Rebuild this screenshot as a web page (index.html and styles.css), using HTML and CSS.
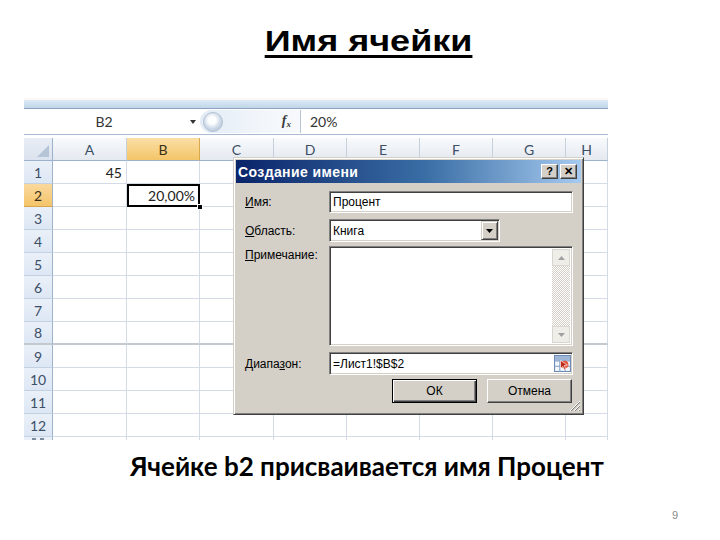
FILE: index.html
```html
<!DOCTYPE html>
<html lang="ru">
<head>
<meta charset="utf-8">
<title>Имя ячейки</title>
<link rel="stylesheet" href="styles.css">
</head>
<body>
<div class="slide">
  <div class="titlewrap"><h1 class="title">Имя ячейки</h1></div>

  <div class="shot">
    <div class="ribbon"></div>
    <div class="fbar">
      <div class="namebox"><span class="nb-text">B2</span><span class="nb-arrow"></span></div>
      <div class="grip"><span class="knob"></span><span class="fx">f<sub>x</sub></span></div>
      <div class="formula">20%</div>
    </div>

    <div class="sheet">
      <div class="row hdr">
        <div class="corner"></div><div>A</div><div class="sel">B</div><div>C</div><div>D</div><div>E</div><div>F</div><div>G</div><div>H</div>
      </div>
      <div class="row"><div class="rh">1</div><div class="num">45</div><div></div><div></div><div></div><div></div><div></div><div></div><div></div></div>
      <div class="row"><div class="rh sel">2</div><div></div><div class="active">20,00%<span class="handle"></span></div><div></div><div></div><div></div><div></div><div></div><div></div></div>
      <div class="row"><div class="rh">3</div><div></div><div></div><div></div><div></div><div></div><div></div><div></div><div></div></div>
      <div class="row"><div class="rh">4</div><div></div><div></div><div></div><div></div><div></div><div></div><div></div><div></div></div>
      <div class="row"><div class="rh">5</div><div></div><div></div><div></div><div></div><div></div><div></div><div></div><div></div></div>
      <div class="row"><div class="rh">6</div><div></div><div></div><div></div><div></div><div></div><div></div><div></div><div></div></div>
      <div class="row"><div class="rh">7</div><div></div><div></div><div></div><div></div><div></div><div></div><div></div><div></div></div>
      <div class="row brk"><div class="rh">8</div><div></div><div></div><div></div><div></div><div></div><div></div><div></div><div></div></div>
      <div class="row"><div class="rh">9</div><div></div><div></div><div></div><div></div><div></div><div></div><div></div><div></div></div>
      <div class="row"><div class="rh">10</div><div></div><div></div><div></div><div></div><div></div><div></div><div></div><div></div></div>
      <div class="row"><div class="rh">11</div><div></div><div></div><div></div><div></div><div></div><div></div><div></div><div></div></div>
      <div class="row"><div class="rh">12</div><div></div><div></div><div></div><div></div><div></div><div></div><div></div><div></div></div>
      <div class="row last"><div class="rh"></div><div></div><div></div><div></div><div></div><div></div><div></div><div></div><div></div></div>
    </div>

    <div class="dialog">
      <div class="titlebar">
        <span class="dtitle">Создание имени</span>
        <span class="tbtn">?</span>
        <span class="tbtn close">✕</span>
      </div>
      <div class="dbody">
        <div class="frow r-name">
          <label class="lbl"><u>И</u>мя:</label>
          <div class="field">Процент</div>
        </div>
        <div class="frow r-scope">
          <label class="lbl"><u>О</u>бласть:</label>
          <div class="field select">Книга<span class="dd"><svg width="7" height="4" viewBox="0 0 7 4"><path d="M0 0H7L3.5 4Z" fill="#000"/></svg></span></div>
        </div>
        <div class="frow r-note">
          <label class="lbl"><u>П</u>римечание:</label>
          <div class="field area">
            <div class="sbar">
              <span class="sbtn"><svg width="7" height="4" viewBox="0 0 7 4"><path d="M0 4H7L3.5 0Z" fill="#a0a0a0"/></svg></span>
              <span class="track"></span>
              <span class="sbtn"><svg width="7" height="4" viewBox="0 0 7 4"><path d="M0 0H7L3.5 4Z" fill="#a0a0a0"/></svg></span>
            </div>
          </div>
        </div>
        <div class="frow r-range">
          <label class="lbl">Диапа<u>з</u>он:</label>
          <div class="field range">=Лист1!$B$2<span class="ricon"><svg width="17" height="17" viewBox="0 0 16 16">
            <rect x="0.5" y="0.5" width="15" height="15" fill="#f4f8fc" stroke="#6c8ab3"/>
            <path d="M0.5 5.5H15.5M0.5 10.5H15.5M5.5 0.5V15.5M10.5 0.5V15.5" stroke="#7f9cc4"/>
            <rect x="1" y="1" width="14" height="4" fill="#9db6d6"/>
            <circle cx="10" cy="9" r="3.6" fill="#e8563c"/>
            <path d="M6 5 L12.5 9.5 L9.6 10 L11.3 13.4 L9.9 14.1 L8.3 10.8 L6.2 12.6Z" fill="#c0281a" stroke="#fff" stroke-width="0.6"/>
          </svg></span></div>
        </div>
        <div class="frow r-btns">
          <span class="btn default">ОК</span>
          <span class="btn">Отмена</span>
        </div>
      </div>
      <svg class="sizegrip" width="12" height="12" viewBox="0 0 12 12">
        <path d="M11 1L1 11M11 5L5 11M11 9L9 11" stroke="#fff" stroke-width="1"/>
        <path d="M11 2L2 11M11 6L6 11M11 10L10 11" stroke="#808080" stroke-width="1"/>
      </svg>
    </div>
  </div>

  <p class="caption">Ячейке b2 присваивается имя Процент</p>
  <div class="footer">9</div>
</div>
</body>
</html>
```

FILE: styles.css
```css
* { box-sizing: border-box; }
html, body { margin: 0; padding: 0; background: #fff; }

.slide {
  width: 720px;
  height: 540px;
  overflow: hidden;
  background: #fff;
}

.titlewrap {
  height: 59px;
  padding-top: 24px;
  padding-left: 18px;
  display: flex;
  justify-content: center;
}
.title {
  margin: 0;
  display: inline-block;
  transform: scaleX(1.2);
  font: 700 30px/34px "Liberation Sans", Arial, sans-serif;
  color: #000;
  text-decoration: underline;
  text-decoration-thickness: 3px;
  text-underline-offset: 4px;
}

/* ---------- Excel screenshot ---------- */
.shot {
  position: relative;
  margin: 39px 0 0 24px;
  width: 584px;
  height: 342px;
  overflow: hidden;
  background: #fff;
  font-family: Lato, "Liberation Sans", sans-serif;
  font-size: 14px;
  color: #222;
}

.ribbon {
  height: 11px;
  background: linear-gradient(#fbf9f7 0 2px, #dce9f4 2px, #c0d6e9 10px);
  border-bottom: 1px solid #8da3bf;
}

.fbar {
  height: 26px;
  display: flex;
  align-items: stretch;
  background: #fff;
  border-bottom: 1px solid #a9bbd1;
}
.namebox {
  width: 176px;
  display: flex;
  align-items: center;
  flex: none;
}
.nb-text {
  width: 160px;
  text-align: center;
  color: #333;
}
.nb-arrow {
  width: 0; height: 0;
  margin-left: 6px;
  border-left: 3.5px solid transparent;
  border-right: 3.5px solid transparent;
  border-top: 4px solid #333;
}
.grip {
  width: 101px;
  flex: none;
  display: flex;
  align-items: center;
  background: linear-gradient(90deg, #e3ebf5, #f2f6fb 60%, #f7f9fc);
  border-right: 1px solid #b9c6d6;
  border-radius: 13px 0 0 13px;
  margin: 1px 0;
}
.knob {
  width: 20px; height: 20px;
  margin-left: 3px;
  border-radius: 50%;
  background: radial-gradient(circle at 45% 40%, #fdfefe 0 25%, #c9d6e5 60%, #aebfd3);
  border: 1px solid #b3c2d4;
}
.fx {
  margin-left: auto;
  margin-right: 9px;
  font: italic 700 14px/1 "Liberation Serif", serif;
  color: #3a3a3a;
}
.fx sub { font-size: 9px; vertical-align: -2px; }
.formula {
  display: flex;
  align-items: center;
  padding-left: 9px;
  color: #333;
}

.sheet { margin-top: 3px; }
.row {
  display: grid;
  grid-template-columns: 29px 74px 73px 74px 73px 73px 73px 73px 42px;
  height: 23px;
}
.row > div {
  border-right: 1px solid #d4dbe7;
  border-bottom: 1px solid #d4dbe7;
  display: flex;
  align-items: center;
  justify-content: flex-end;
  padding-right: 3px;
  position: relative;
}
.row.brk > div { border-bottom: 2px solid #c4c8cf; }
.row > .rh {
  justify-content: center;
  padding: 0;
  background: linear-gradient(#eaf0f8, #dde7f4);
  border-right: 1px solid #9db3cd;
  border-bottom: 1px solid #c3d1e2;
  color: #3c4f67;
}
.row.last > .rh::before {
  content: "";
  position: absolute;
  top: 1px;
  left: 8px;
  width: 13px;
  height: 2px;
  background: repeating-linear-gradient(90deg, #7d8ea4 0 4px, transparent 4px 8px);
}
.row > .rh.sel {
  background: linear-gradient(#fad99e, #f4c469);
  border-bottom-color: #d6a54e;
  color: #3a2e16;
}
.row.hdr > div {
  justify-content: center;
  padding: 0;
  background: linear-gradient(#f8fafc, #e4e9f0);
  border-right: 1px solid #c6d0dc;
  border-bottom: 1px solid #9db3cd;
  color: #3c4f67;
}
.row.hdr > div.sel {
  background: linear-gradient(#fbdfa8, #f3c567);
  border-right-color: #d8a94c;
  color: #3a2e16;
}
.row.hdr > .corner {
  background: linear-gradient(#e9eef5, #dbe3ee);
  border-right-color: #9db3cd;
}
.corner::after {
  content: "";
  position: absolute;
  right: 3px; bottom: 3px;
  border-left: 12px solid transparent;
  border-bottom: 12px solid #b5c4d7;
}
.row > .num { padding-right: 4px; }
.row > .active {
  outline: 2px solid #000;
  outline-offset: -2px;
  border-right-color: #000;
  border-bottom-color: #000;
  padding-right: 4px;
  color: #222;
}
.handle {
  position: absolute;
  right: -4px; bottom: -4px;
  width: 6px; height: 6px;
  background: #000;
  border: 1px solid #fff;
  z-index: 2;
}

/* ---------- Dialog ---------- */
.dialog {
  position: absolute;
  left: 209px;
  top: 59px;
  width: 351px;
  height: 258px;
  padding: 2px;
  background: #d4d0c8;
  border: 1px solid;
  border-color: #d4d0c8 #404040 #404040 #d4d0c8;
  box-shadow: inset 1px 1px #fff, inset -1px -1px #808080;
  font: 12px/14px "Liberation Sans", Arial, sans-serif;
  color: #000;
  z-index: 3;
}
.titlebar {
  height: 23px;
  display: flex;
  align-items: center;
  padding: 0 4px 0 2px;
  background: linear-gradient(90deg, #0a246a, #3a6ea5 55%, #a6caf0);
}
.dtitle {
  color: #fff;
  font: 700 14px/1 "Liberation Sans", Arial, sans-serif;
  letter-spacing: 0.4px;
  margin-right: auto;
}
.tbtn {
  width: 17px;
  height: 15px;
  display: flex;
  align-items: center;
  justify-content: center;
  background: #d4d0c8;
  border: 1px solid;
  border-color: #fff #404040 #404040 #fff;
  box-shadow: inset -1px -1px #808080;
  font: 700 11px/1 "Liberation Sans", Arial, sans-serif;
  margin-left: 2px;
}
.tbtn.close { font-size: 11px; }

.dbody {
  padding: 8px 8px 0 9px;
  display: flex;
  flex-direction: column;
}
.frow {
  display: flex;
  align-items: center;
}
.lbl {
  width: 84px;
  flex: none;
}
.lbl u { text-underline-offset: 1px; }
.r-scope { margin-top: 6px; }
.r-note { margin-top: 4px; align-items: flex-start; }
.r-note .lbl { padding-top: 2px; }
.r-range { margin-top: 6px; }
.r-btns { margin-top: 4px; justify-content: flex-end; gap: 10px; padding-right: 1px; }

.field {
  width: 244px;
  height: 22px;
  background: #fff;
  border: 1px solid;
  border-color: #808080 #fff #fff #808080;
  box-shadow: inset 1px 1px #404040, inset -1px -1px #d4d0c8;
  display: flex;
  align-items: center;
  padding-left: 3px;
  position: relative;
}
.field.select { width: 171px; height: 23px; }
.dd {
  margin-left: auto;
  width: 17px;
  height: 19px;
  margin-right: 1px;
  background: #d4d0c8;
  border: 1px solid;
  border-color: #d4d0c8 #404040 #404040 #d4d0c8;
  box-shadow: inset 1px 1px #fff, inset -1px -1px #808080;
  display: flex;
  align-items: center;
  justify-content: center;
}
.field.area {
  height: 100px;
  align-items: stretch;
  padding: 2px 2px 2px 0;
  justify-content: flex-end;
}
.sbar {
  width: 18px;
  display: flex;
  flex-direction: column;
}
.sbtn {
  height: 17px;
  display: flex;
  align-items: center;
  justify-content: center;
  background: #eeede8;
  border: 1px solid #d8d6ce;
}
.track {
  flex: 1;
  background: repeating-conic-gradient(#d4d0c8 0 25%, #fff 0 50%) 0 0 / 2px 2px;
}
.field.range { height: 23px; }
.ricon {
  margin-left: auto;
  margin-right: 1px;
  width: 18px;
  height: 19px;
  display: flex;
  align-items: center;
  justify-content: center;
}

.btn {
  width: 85px;
  height: 24px;
  display: flex;
  align-items: center;
  justify-content: center;
  background: #d4d0c8;
  border: 1px solid;
  border-color: #fff #404040 #404040 #fff;
  box-shadow: inset -1px -1px #808080;
}
.btn.default {
  border: 1px solid #000;
  box-shadow: inset 1px 1px #fff, inset -1px -1px #404040, inset -2px -2px #808080;
}
.sizegrip {
  position: absolute;
  right: 2px;
  bottom: 2px;
}

/* ---------- Caption ---------- */
.caption {
  margin: 11px 0 0;
  padding-left: 14px;
  text-align: center;
  font: 700 26px/30px Lato, "Open Sans", sans-serif;
  color: #000;
}
.footer {
  margin-top: 27px;
  height: 14px;
  text-align: right;
  padding-right: 42px;
  font: 11px/14px "Liberation Sans", Arial, sans-serif;
  color: #8a8a8a;
}
```
